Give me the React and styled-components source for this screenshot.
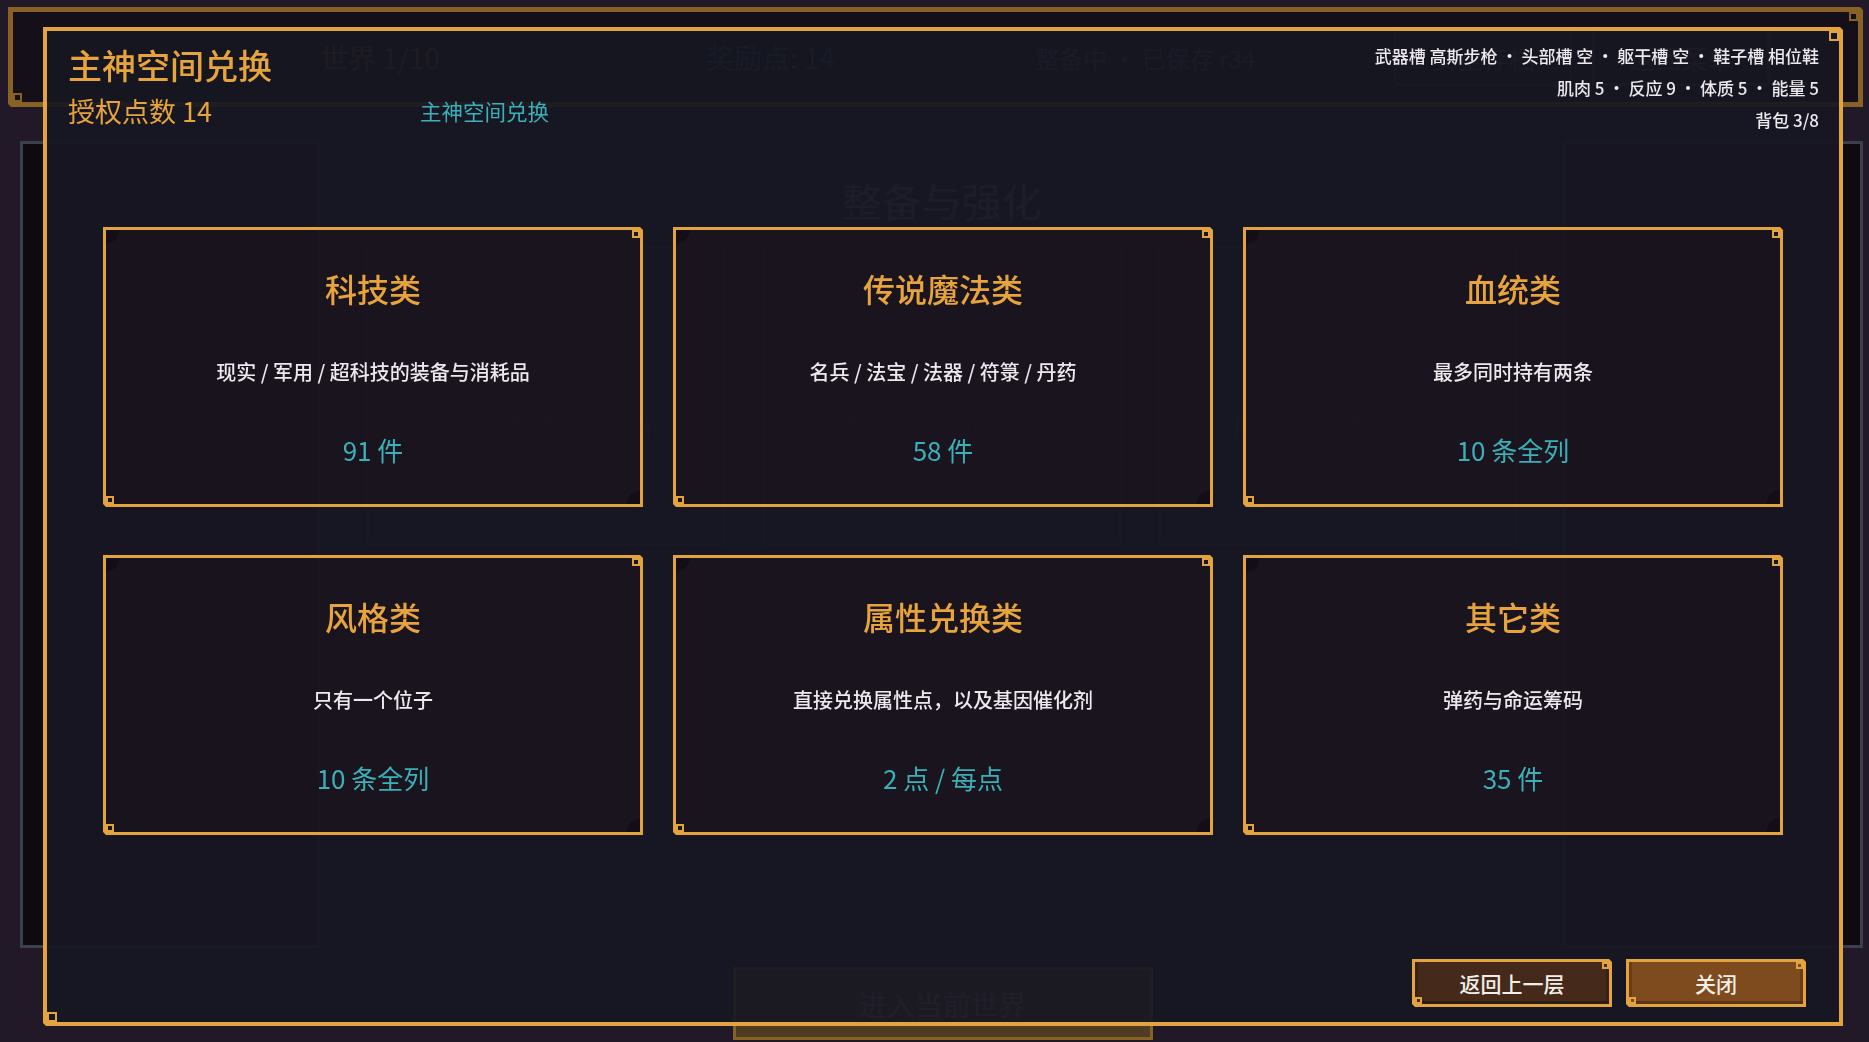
import React from 'react'
import styled, { createGlobalStyle, css } from 'styled-components'

const gold = '#e3a43f'
const teal = '#3bb0b8'
const font = `"Noto Sans CJK SC", "Noto Sans", sans-serif`

const GlobalStyle = createGlobalStyle`
  html, body {
    margin: 0;
    height: 100%;
    background: #372b41;
    font-family: ${font};
  }
  #root { height: 100%; }
`

// pixel-art notches on the top-right and bottom-left corners
const notched = (size, fill) => css`
  clip-path: polygon(0 0, calc(100% - 3px) 0, 100% 3px, 100% 100%, 3px 100%, 0 calc(100% - 3px));
  &::before, &::after {
    content: '';
    position: absolute;
    width: ${size}px;
    height: ${size}px;
    box-sizing: border-box;
    border: 2px solid ${gold};
    background: ${fill};
  }
  &::before { top: 0; right: 0; }
  &::after { bottom: 0; left: 0; }
`

/* ---------- page behind the dialog ---------- */

const Screen = styled.div`
  height: 100vh;
  box-sizing: border-box;
  padding: 7px 6px 0 8px;
  display: flex;
  flex-direction: column;
  overflow: hidden;
`
const TopBar = styled.div`
  position: relative;
  height: 100px;
  box-sizing: border-box;
  border: 5px solid ${gold};
  background: #221a28;
  display: flex;
  align-items: center;
  padding: 0 88px 0 307px;
  ${notched(9, '#221a28')}
`
const HudText = styled.div`
  font-size: ${p => p.$size || 28}px;
  margin-left: ${p => p.$gap || 0}px;
  color: ${p => (p.$tone === 'gold' ? '#c89040' : p.$tone === 'teal' ? '#3a9aa0' : '#8a8696')};
`
const HudButton = styled.div`
  height: 58px;
  width: 178px;
  box-sizing: border-box;
  border: 3px solid #6a5a48;
  display: flex;
  align-items: center;
  justify-content: center;
  font-size: 26px;
  color: #8a8090;
  margin-left: ${p => (p.$first ? 'auto' : '20px')};
`
const Main = styled.div`
  flex: 1;
  display: flex;
  padding: 34px 0 0 12px;
`
const SidePanel = styled.div`
  width: 300px;
  height: 807px;
  box-sizing: border-box;
  border: 3px solid #626a82;
  background: #18121b;
`
const Center = styled.div`
  flex: 1;
  display: flex;
  flex-direction: column;
  align-items: center;
`
const BgTitle = styled.div`
  margin-top: 35px;
  font-size: 40px;
  line-height: 48px;
  color: #b8aec0;
`
const BgGrid = styled.div`
  margin-top: 22px;
  display: grid;
  grid-template-columns: repeat(3, 360px);
  gap: 36px;
`
const BgCard = styled.div`
  height: 300px;
  box-sizing: border-box;
  border: 3px solid #6e5c50;
  display: flex;
  flex-direction: column;
  align-items: center;
  justify-content: center;
  gap: 22px;
  font-size: 24px;
  color: #6e6474;
`
const BottomBar = styled.div`
  height: 75px;
  display: flex;
  justify-content: center;
  padding-left: 14px;
`
const EnterButton = styled.div`
  width: 420px;
  height: 73px;
  box-sizing: border-box;
  border: 3px solid ${gold};
  background: #84613a;
  display: flex;
  align-items: center;
  justify-content: center;
  font-size: 28px;
  color: #e8e0d8;
`

/* ---------- dialog ---------- */

const Overlay = styled.div`
  position: fixed;
  inset: 0;
  background: rgba(0, 0, 0, 0.4);
  padding: 27px 26px 16px 43px;
  display: flex;
`
const Modal = styled.div`
  flex: 1;
  position: relative;
  box-sizing: border-box;
  border: 4px solid ${gold};
  background: rgba(23, 23, 34, 0.93);
  display: flex;
  flex-direction: column;
  ${notched(10, '#171722')}
`
const Header = styled.div`
  display: flex;
  justify-content: space-between;
  align-items: flex-start;
  padding: 9px 20px 0 21px;
`
const Title = styled.div`
  margin-top: 5px;
  font-size: 34px;
  line-height: 40px;
  font-weight: 500;
  color: #e8a43c;
`
const SubRow = styled.div`
  margin-top: 7px;
  height: 36px;
  display: flex;
  align-items: center;
`
const Points = styled.div`
  min-width: 352px;
  font-size: 27px;
  color: #e8a43c;
`
const Crumb = styled.div`
  font-size: 21.5px;
  color: ${teal};
`
const Info = styled.div`
  text-align: right;
`
const InfoLine = styled.div`
  font-size: 17px;
  line-height: 32px;
  font-weight: 500;
  color: #ece8ec;
  white-space: nowrap;
`
const Sep = styled.span`
  display: inline-block;
  width: 24px;
  text-align: center;
`
const Grid = styled.div`
  margin-top: 91px;
  padding: 0 56px;
  display: grid;
  grid-template-columns: repeat(3, 540px);
  grid-auto-rows: 280px;
  gap: 48px 30px;
`
const Card = styled.div`
  position: relative;
  box-sizing: border-box;
  border: 3px solid ${gold};
  background:
    radial-gradient(circle at 0 0, rgba(10, 6, 12, 0.45) 13px, transparent 14px),
    radial-gradient(circle at 100% 100%, rgba(10, 6, 12, 0.45) 13px, transparent 14px),
    rgba(30, 19, 30, 0.55);
  display: flex;
  flex-direction: column;
  align-items: center;
  padding-top: 38px;
  ${notched(8, '#1b1520')}
`
const CardTitle = styled.div`
  font-size: 32px;
  line-height: 40px;
  font-weight: 500;
  color: #e8a43c;
`
const CardDesc = styled.div`
  margin-top: 50px;
  font-size: 20px;
  line-height: 28px;
  font-weight: 500;
  color: #ece8ec;
`
const CardCount = styled.div`
  margin-top: 47px;
  font-size: 26px;
  line-height: 34px;
  color: ${teal};
`
const Footer = styled.div`
  margin-top: auto;
  display: flex;
  justify-content: flex-end;
  gap: 14px;
  padding: 0 33px 15px 0;
`
const Button = styled.button`
  position: relative;
  width: ${p => p.$width}px;
  height: 48px;
  box-sizing: border-box;
  border: 3px solid ${gold};
  background: ${p => (p.$primary ? '#7d4b1e' : '#45291a')};
  box-shadow: inset 0 -3px 0 ${p => (p.$primary ? '#5e3413' : '#2f1c10')},
    inset 3px 0 0 ${p => (p.$primary ? '#6a3d17' : '#38210f')},
    inset -3px 0 0 ${p => (p.$primary ? '#6a3d17' : '#38210f')};
  font-family: ${font};
  font-size: 21px;
  font-weight: 500;
  color: #f2eee8;
  padding: 0;
  ${p => notched(7, p.$primary ? '#7d4b1e' : '#45291a')}
`

const categories = [
  { name: '科技类', desc: '现实 / 军用 / 超科技的装备与消耗品', count: '91 件' },
  { name: '传说魔法类', desc: '名兵 / 法宝 / 法器 / 符箓 / 丹药', count: '58 件' },
  { name: '血统类', desc: '最多同时持有两条', count: '10 条全列' },
  { name: '风格类', desc: '只有一个位子', count: '10 条全列' },
  { name: '属性兑换类', desc: '直接兑换属性点，以及基因催化剂', count: '2 点 / 每点' },
  { name: '其它类', desc: '弹药与命运筹码', count: '35 件' },
]

const bgCards = [
  ['主神空间兑换', '消耗奖励点购买装备'],
  ['查看背包', '整理已获得的物品'],
  ['查看属性', '肌肉 反应 体质 能量'],
]

const Line = ({ parts }) => (
  <InfoLine>
    {parts.map((p, i) => (
      <React.Fragment key={i}>
        {i > 0 && <Sep>·</Sep>}
        {p}
      </React.Fragment>
    ))}
  </InfoLine>
)

const App = () => {
  return (
    <>
      <GlobalStyle />
      <Screen>
        <TopBar>
          <HudText $tone="gold">世界 1/10</HudText>
          <HudText $tone="teal" $gap={266}>奖励点: 14</HudText>
          <HudText $gap={200} $size={24}>整备中 · 已保存 r34</HudText>
          <HudButton $first>安全存档</HudButton>
          <HudButton>返回菜单</HudButton>
        </TopBar>
        <Main>
          <SidePanel />
          <Center>
            <BgTitle>整备与强化</BgTitle>
            <BgGrid>
              {bgCards.map(([a, b]) => (
                <BgCard key={a}>
                  <div>{a}</div>
                  <div>{b}</div>
                </BgCard>
              ))}
            </BgGrid>
          </Center>
          <SidePanel />
        </Main>
        <BottomBar>
          <EnterButton>进入当前世界</EnterButton>
        </BottomBar>
      </Screen>

      <Overlay>
        <Modal>
          <Header>
            <div>
              <Title>主神空间兑换</Title>
              <SubRow>
                <Points>授权点数 14</Points>
                <Crumb>主神空间兑换</Crumb>
              </SubRow>
            </div>
            <Info>
              <Line parts={['武器槽 高斯步枪', '头部槽 空', '躯干槽 空', '鞋子槽 相位鞋']} />
              <Line parts={['肌肉 5', '反应 9', '体质 5', '能量 5']} />
              <InfoLine>背包 3/8</InfoLine>
            </Info>
          </Header>
          <Grid>
            {categories.map(c => (
              <Card key={c.name}>
                <CardTitle>{c.name}</CardTitle>
                <CardDesc>{c.desc}</CardDesc>
                <CardCount>{c.count}</CardCount>
              </Card>
            ))}
          </Grid>
          <Footer>
            <Button $width={200}>返回上一层</Button>
            <Button $width={180} $primary>关闭</Button>
          </Footer>
        </Modal>
      </Overlay>
    </>
  )
}

export default App
